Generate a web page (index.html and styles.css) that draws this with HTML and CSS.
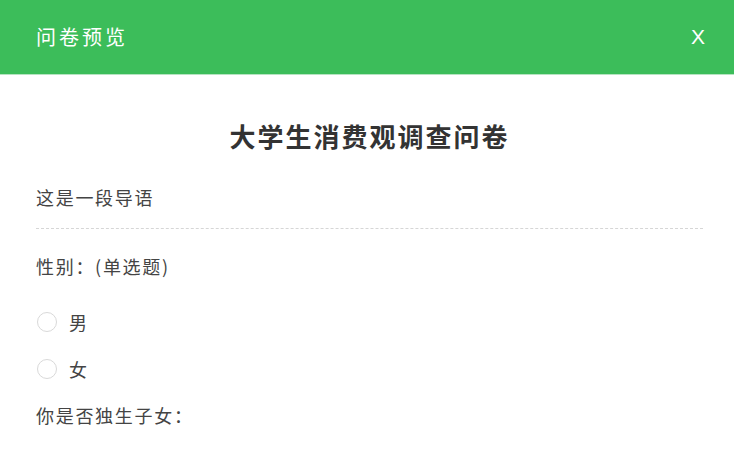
FILE: index.html
```html
<!DOCTYPE html>
<html lang="zh-CN">
<head>
    <meta charset="UTF-8">
    <meta name="viewport" content="width=device-width, initial-scale=1.0">
    <title>问卷预览</title>
    <link rel="stylesheet" href="styles.css">
</head>
<body>
    <div class="header">
        <span class="header-title">问卷预览</span>
        <span class="close">X</span>
    </div>

    <div class="survey">
        <h1 class="survey-title">大学生消费观调查问卷</h1>
        <p class="intro">这是一段导语</p>
        <div class="divider"></div>

        <div class="question">
            <p class="question-title">性别：(单选题)</p>
            <label class="option"><span class="radio"></span>男</label>
            <label class="option"><span class="radio"></span>女</label>
        </div>

        <div class="question">
            <p class="question-title">你是否独生子女：</p>
        </div>
    </div>
</body>
</html>
```

FILE: styles.css
```css
body {
    margin: 0;
    font-family: "Noto Sans CJK SC", "Noto Sans", sans-serif;
    background: #fff;
    color: #333;
}
.header {
    height: 74px;
    background-color: #3cbd5a;
    border-bottom: 1px solid #b6e4c1;
    display: flex;
    align-items: center;
    justify-content: space-between;
    padding: 0 29px 0 36px;
    color: #fff;
}
.header-title {
    font-size: 20px;
    letter-spacing: 3px;
    line-height: 24px;
}
.close {
    font-family: "Liberation Sans", Arial, sans-serif;
    font-size: 21px;
    line-height: 24px;
}
.survey {
    padding: 0 31px 0 36px;
}
.survey-title {
    margin: 41px 0 0;
    font-size: 26px;
    letter-spacing: 2px;
    line-height: 40px;
    font-weight: bold;
    text-align: center;
    color: #333;
}
.intro, .question-title {
    margin: 0;
    font-size: 18px;
    letter-spacing: 1.7px;
    line-height: 24px;
    color: #444;
}
.intro {
    margin-top: 29px;
}
.divider {
    margin-top: 19px;
    border-top: 1px dashed #d6d6d6;
}
.question {
    margin-top: 25px;
}
.question + .question {
    margin-top: 22px;
}
.option {
    display: flex;
    align-items: center;
    gap: 12px;
    font-size: 18px;
    line-height: 24px;
    color: #444;
    margin-top: 23px;
}
.option:first-of-type {
    margin-top: 32px;
}
.radio {
    width: 18px;
    height: 18px;
    margin-left: 1px;
    border: 1px solid #d9d9d9;
    border-radius: 50%;
    background: #fff;
}
```
